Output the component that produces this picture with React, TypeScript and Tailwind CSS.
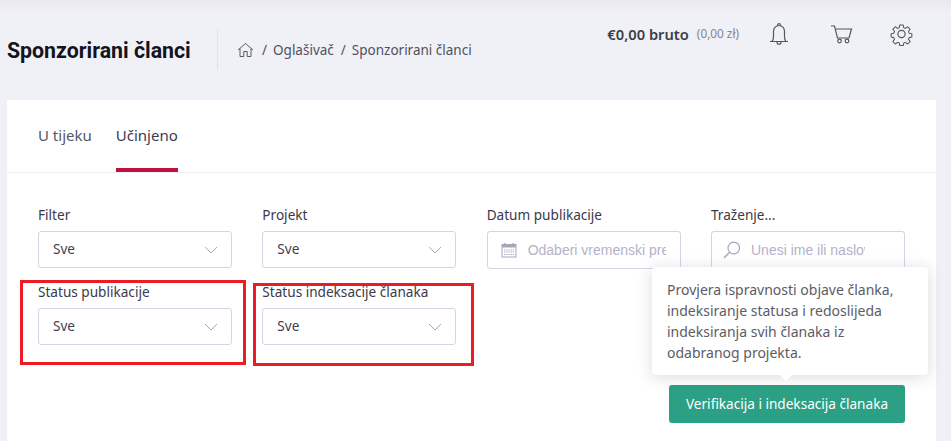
import React from "react";

function Chevron() {
  return (
    <svg width="14" height="8" viewBox="0 0 14 8" fill="none" stroke="#a9a6c4" strokeWidth="1">
      <path d="M1 1l6 6 6-6" />
    </svg>
  );
}

function Select({ label }: { label: string }) {
  return (
    <div className="flex flex-col">
      <div className="h-[21px] text-[13.6px] leading-[21px] text-[#3a3a4a]">{label}</div>
      <div className="mt-[6px] flex h-[37px] items-center justify-between rounded-[3px] border border-[#d4d4e4] bg-white pl-[14px] pr-[13px] text-[13.6px] text-[#3f3f50]">
        <span>Sve</span>
        <Chevron />
      </div>
    </div>
  );
}

function Calendar() {
  return (
    <svg width="16" height="16" viewBox="0 0 16 16" fill="none" className="shrink-0">
      <rect x="1" y="2.500" width="14" height="12.500" stroke="#a7a5bd" strokeWidth="1" />
      <rect x="1" y="2.500" width="14" height="3" fill="#a7a5bd" />
      <path d="M4 1v2M12 1v2" stroke="#a7a5bd" strokeWidth="1.400" />
      <path d="M3 8h10M3 10h10M3 12.500h10" stroke="#a7a5bd" strokeWidth="1.200" strokeDasharray="1.300 0.900" />
    </svg>
  );
}

function Search() {
  return (
    <svg width="18" height="18" viewBox="0 0 18 18" fill="none" stroke="#a7a5bd" strokeWidth="1.200" className="shrink-0">
      <circle cx="10.800" cy="7" r="5.800" />
      <path d="M6.600 11.200L1 17" strokeWidth="1.500" />
    </svg>
  );
}

export default function App() {
  return (
    <div className="relative h-[441px] w-[951px] overflow-hidden bg-[#f0f1f7] font-['Noto_Sans','Open_Sans',sans-serif]">
      <div className="h-[100px] bg-gradient-to-b from-[#e9e9ed] to-[#f0f1f7] to-[14%]">
        <div className="flex h-[100px] items-center pr-[38px]">
          <h1 className="ml-[7px] mt-[2px] w-[184px] whitespace-nowrap font-['Roboto',sans-serif] text-[21.3px] font-bold leading-none text-[#14141c]">
            Sponzorirani članci
          </h1>
          <div className="ml-[26px] h-[40px] w-px bg-[#e2e3ea]" />
          <div className="ml-[19px] flex items-center text-[13.500px] text-[#50505e]">
            <svg width="17" height="16" viewBox="0 0 17 16" fill="none" stroke="#5a5a66" strokeWidth="1">
              <path d="M1 8L8.500 1.500 16 8M3 6.500V14.500h3.800V9.500h3.400v5H14V6.500" />
            </svg>
            <span className="ml-[8px]">/</span>
            <span className="ml-[6px]">Oglašivač</span>
            <span className="ml-[7px]">/</span>
            <span className="ml-[6px]">Sponzorirani članci</span>
          </div>
          <div className="ml-auto mb-[32px] flex items-center">
            <span className="text-[14.700px] font-semibold text-[#3d3d48]">€0,00 bruto</span>
            <span className="ml-[8px] text-[11.800px] text-[#85858f]">(0,00 zł)</span>
            <svg className="ml-[31px]" width="18" height="24" viewBox="0 0 18 24" fill="none" stroke="#55555f" strokeWidth="1.200">
              <path d="M0 19.500h18M2 19.500c1.200-1.500 1.500-3 1.500-5V9.500C3.500 6 6 3.500 9 3.500s5.500 2.500 5.500 6v5c0 2 .3 3.500 1.500 5" />
              <path d="M7.500 3.500C7.500 1 10.500 1 10.500 3.500M7 20c0 3 4 3 4 0" />
            </svg>
            <svg className="ml-[43px]" width="22" height="19" viewBox="0 0 22 19" fill="none" stroke="#55555f" strokeWidth="1.200">
              <path d="M0 1h3.500l3 12h11.500L20.500 4H5" />
              <circle cx="8.500" cy="16" r="1.800" />
              <circle cx="16" cy="16" r="1.800" />
            </svg>
            <svg className="ml-[37px]" width="23" height="24" viewBox="0 0 24 24" fill="none" stroke="#55555f" strokeWidth="1.200" strokeLinejoin="round">
              <circle cx="12" cy="12" r="3.800" />
              <path d="M10 1.500h4l.6 3.200 1.900.8 2.700-1.900 2.800 2.800-1.900 2.700.8 1.900 3.100.6v4l-3.100.6-.8 1.900 1.900 2.700-2.800 2.800-2.700-1.900-1.900.8-.6 2.900h-4l-.6-2.900-1.900-.8-2.700 1.900-2.800-2.800 1.900-2.700-.8-1.900-3.100-.6v-4l3.100-.6.8-1.900-1.900-2.700 2.800-2.800 2.700 1.900 1.900-.8z" transform="translate(1.200 1.200) scale(.9)" />
            </svg>
          </div>
        </div>
      </div>

      <div className="ml-[7px] h-[341px] w-[929px] bg-white">
        <div className="flex h-[73px] items-stretch gap-[24px] border-b border-[#eeeef3] pl-[31px] text-[15px]">
          <div className="pt-[25px] leading-[21px] text-[#565663]">U tijeku</div>
          <div className="border-b-[4px] border-[#c0123f] pt-[25px] leading-[21px] text-[#3c3a55]">Učinjeno</div>
        </div>

        <div className="grid grid-cols-[repeat(4,194px)] gap-x-[30.330px] gap-y-[12px] pl-[31px] pt-[31px]">
          <Select label="Filter" />
          <Select label="Projekt" />
          <div className="flex flex-col">
            <div className="h-[21px] text-[13.6px] leading-[21px] text-[#3a3a4a]">Datum publikacije</div>
            <div className="mt-[6px] flex h-[38px] items-center overflow-hidden rounded-[3px] border border-[#d4d4e4] pl-[13px] pr-[14px]">
              <Calendar />
              <span className="ml-[11px] overflow-hidden whitespace-nowrap font-['Liberation_Sans',sans-serif] text-[14px] text-[#b4b2c8]">Odaberi vremenski pre</span>
            </div>
          </div>
          <div className="flex flex-col">
            <div className="h-[21px] text-[13.6px] leading-[21px] text-[#3a3a4a]">Traženje...</div>
            <div className="mt-[6px] flex h-[38px] items-center overflow-hidden rounded-[3px] border border-[#d4d4e4] pl-[11px] pr-[39px]">
              <Search />
              <span className="ml-[10px] overflow-hidden whitespace-nowrap font-['Liberation_Sans',sans-serif] text-[14px] text-[#b4b2c8]">Unesi ime ili naslov</span>
            </div>
          </div>
          <Select label="Status publikacije" />
          <Select label="Status indeksacije članaka" />
        </div>

        <div className="mt-[40px] flex justify-end pr-[31px]">
          <div className="flex h-[38px] w-[236px] items-center justify-center rounded-[3px] bg-[#2ba084] text-[13.6px] text-white">
            Verifikacija i indeksacija članaka
          </div>
        </div>
      </div>

      {/* annotations and tooltip lying over the page */}
      <div className="absolute left-[20px] top-[280px] h-[85px] w-[226px] border-[3px] border-[#ed1c24]" />
      <div className="absolute left-[253px] top-[283px] h-[83px] w-[221px] border-[3px] border-[#ed1c24]" />

      <div className="absolute left-[652px] top-[267px] h-[108px] w-[276px] rounded-[4px] bg-white pl-[15px] pt-[12px] text-[14px] leading-[21px] text-[#5c5c66] shadow-[0_2px_16px_rgba(30,30,60,0.16)]">
        Provjera ispravnosti objave članka,
        <br />
        indeksiranje statusa i redoslijeda
        <br />
        indeksiranja svih članaka iz
        <br />
        odabranog projekta.
        <div className="absolute left-[127px] top-[107px] h-0 w-0 border-x-[7px] border-t-[7px] border-x-transparent border-t-white" />
      </div>
    </div>
  );
}
